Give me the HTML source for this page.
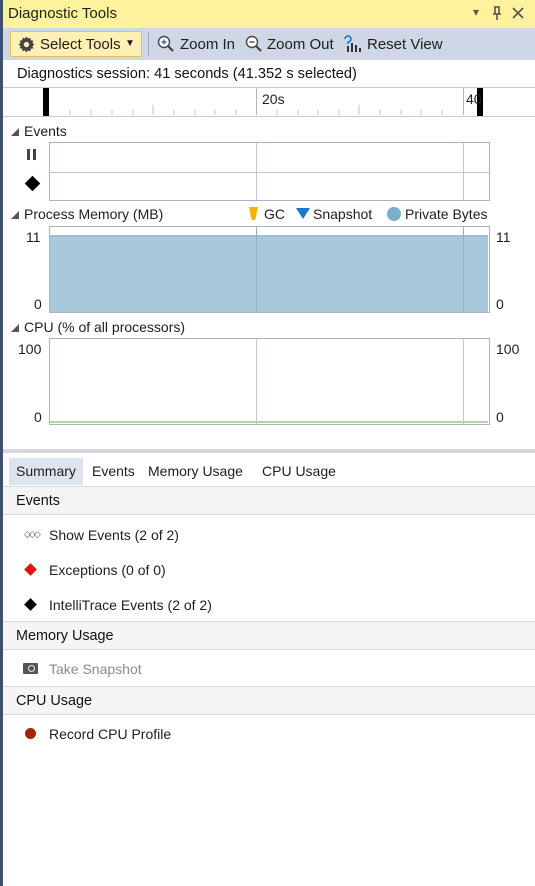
<!DOCTYPE html>
<html><head><meta charset="utf-8"><style>
*{margin:0;padding:0;box-sizing:border-box}
body{width:535px;height:886px;position:relative;background:#fff;font-family:"Liberation Sans",sans-serif;font-size:14px;color:#1e1e1e;overflow:hidden}
.a{position:absolute;white-space:nowrap}
.box{position:absolute;border:1px solid #aab3c5;background:#fff}
.vl{position:absolute;width:1px;background:#bfc6d4}
.hdr{position:absolute;left:3px;right:0;height:29px;background:#f5f5f5;border-top:1px solid #d6dae2;border-bottom:1px solid #d6dae2}
.hdr span{position:absolute;left:13px;top:6px;font-size:14.4px;color:#111}
.tri{display:inline-block;width:0;height:0;border-left:8px solid transparent;border-bottom:8px solid #555;margin-right:5px}
</style></head><body>
<div class="a" style="left:0;top:0;width:3px;height:886px;background:#3e4f74"></div>
<div class="a" style="left:3px;top:0;right:0;height:28px;background:#fff29d"></div>
<div class="a" style="left:8px;top:5px;font-size:15px">Diagnostic Tools</div>
<div class="a" style="left:473px;top:5px;font-size:12px;color:#555">▾</div>
<svg class="a" style="left:491px;top:6px" width="12" height="14"><path d="M3 1h6M4 1v7M8 1v7M2 8h8M6 8v6" stroke="#555" stroke-width="1.6" fill="none"/></svg>
<svg class="a" style="left:512px;top:7px" width="12" height="12"><path d="M1 1l10 10M11 1L1 11" stroke="#555" stroke-width="1.6"/></svg>
<div class="a" style="left:3px;top:28px;right:0;height:32px;background:#cfd6e5"></div>
<div class="a" style="left:10px;top:31px;width:132px;height:26px;background:#fff0b3;border:1px solid #e5c365"></div>
<svg class="a" style="left:18px;top:36px" width="17" height="17" viewBox="0 0 16 16"><path d="M8 0.5l1.4 2 2.3-.8.3 2.4 2.4.3-.8 2.3 2 1.3-2 1.4.8 2.3-2.4.3-.3 2.4-2.3-.8L8 15.5l-1.4-2-2.3.8-.3-2.4-2.4-.3.8-2.3-2-1.3 2-1.4-.8-2.3 2.4-.3.3-2.4 2.3.8z" fill="#444"/><circle cx="8" cy="8" r="2.5" fill="#fff0b3"/></svg>
<div class="a" style="left:40px;top:36px;font-size:15px">Select Tools</div>
<div class="a" style="left:125px;top:38px;font-size:10px">▼</div>
<div class="a" style="left:148px;top:32px;width:1px;height:24px;background:#a0a8b8"></div>
<svg class="a" style="left:157px;top:35px" width="18" height="18"><circle cx="7" cy="7" r="5.5" stroke="#444" stroke-width="1.4" fill="#fff"/><path d="M11 11l5 5" stroke="#444" stroke-width="2.2"/><path d="M4.5 7h5M7 4.5v5" stroke="#1a6fc4" stroke-width="1.4"/></svg>
<div class="a" style="left:180px;top:36px;font-size:15px">Zoom In</div>
<svg class="a" style="left:245px;top:35px" width="18" height="18"><circle cx="7" cy="7" r="5.5" stroke="#444" stroke-width="1.4" fill="#fff"/><path d="M11 11l5 5" stroke="#444" stroke-width="2.2"/><path d="M4.5 7h5" stroke="#444" stroke-width="1.4"/></svg>
<div class="a" style="left:267px;top:36px;font-size:15px">Zoom Out</div>
<svg class="a" style="left:343px;top:35px" width="20" height="18"><path d="M2 4a3 3 0 1 1 3 3v2" stroke="#1a6fc4" stroke-width="1.5" fill="none"/><rect x="4" y="11" width="2" height="6" fill="#333"/><rect x="8" y="8" width="2" height="9" fill="#333"/><rect x="12" y="10" width="2" height="7" fill="#333"/><rect x="16" y="13" width="2" height="4" fill="#333"/></svg>
<div class="a" style="left:367px;top:36px;font-size:15px">Reset View</div>
<div class="a" style="left:17px;top:66px;font-size:14.6px;color:#111">Diagnostics session: 41 seconds (41.352 s selected)</div>
<div class="a" style="left:3px;top:87px;right:0;height:1px;background:#c5cbd6"></div>
<svg class="a" style="left:0;top:88px" width="535" height="28">
<g stroke="#c0c4cc" stroke-width="1">
<line x1="70" y1="22" x2="70" y2="27"/><line x1="91" y1="22" x2="91" y2="27"/><line x1="112" y1="22" x2="112" y2="27"/><line x1="133" y1="22" x2="133" y2="27"/><line x1="153" y1="17" x2="153" y2="27"/><line x1="174" y1="22" x2="174" y2="27"/><line x1="195" y1="22" x2="195" y2="27"/><line x1="215" y1="22" x2="215" y2="27"/><line x1="236" y1="22" x2="236" y2="27"/><line x1="277" y1="22" x2="277" y2="27"/><line x1="298" y1="22" x2="298" y2="27"/><line x1="318" y1="22" x2="318" y2="27"/><line x1="339" y1="22" x2="339" y2="27"/><line x1="359" y1="17" x2="359" y2="27"/><line x1="380" y1="22" x2="380" y2="27"/><line x1="401" y1="22" x2="401" y2="27"/><line x1="421" y1="22" x2="421" y2="27"/><line x1="442" y1="22" x2="442" y2="27"/></g>
<g stroke="#b0b6c2"><line x1="256.5" y1="0" x2="256.5" y2="27"/><line x1="463.5" y1="0" x2="463.5" y2="27"/></g>
<rect x="43" y="0" width="6" height="28" fill="#000"/><rect x="477" y="0" width="6" height="28" fill="#000"/>
<text x="262" y="16" font-size="14" font-family="Liberation Sans" fill="#222">20s</text>
<text x="466" y="16" font-size="14" font-family="Liberation Sans" fill="#222">40</text>
</svg>
<div class="a" style="left:3px;top:116px;right:0;height:1px;background:#c5cbd6"></div>

<div class="a" style="left:11px;top:123px;font-size:14px"><span class="tri"></span>Events</div>
<div class="a" style="left:27px;top:149px;width:3px;height:11px;background:#444"></div>
<div class="a" style="left:33px;top:149px;width:3px;height:11px;background:#444"></div>
<div class="a" style="left:27px;top:178px;width:11px;height:11px;background:#000;transform:rotate(45deg)"></div>
<div class="box" style="left:49px;top:142px;width:441px;height:59px"></div>
<div class="a" style="left:50px;top:172px;width:439px;height:1px;background:#bfc6d4"></div>
<div class="vl" style="left:256px;top:143px;height:57px"></div>
<div class="vl" style="left:463px;top:143px;height:57px"></div>

<div class="a" style="left:11px;top:206px;font-size:14px"><span class="tri"></span>Process Memory (MB)</div>
<div class="a" style="left:249px;top:207px;width:9px;height:13px;background:#f5b400;border-radius:0 0 5px 5px;clip-path:polygon(0 0,100% 0,70% 100%,30% 100%)"></div>
<div class="a" style="left:264px;top:206px;font-size:14px">GC</div>
<div class="a" style="left:296px;top:208px;width:0;height:0;border-left:7px solid transparent;border-right:7px solid transparent;border-top:11px solid #1c75cf"></div>
<div class="a" style="left:313px;top:206px;font-size:14px">Snapshot</div>
<div class="a" style="left:387px;top:207px;width:14px;height:14px;border-radius:50%;background:#7aafca"></div>
<div class="a" style="left:405px;top:206px;font-size:14px">Private Bytes</div>
<div class="box" style="left:49px;top:226px;width:441px;height:87px"></div>
<div class="a" style="left:50px;top:235px;width:438px;height:77px;background:#a8c9db"></div>
<div class="a" style="left:50px;top:235px;width:438px;height:2px;background:#9cc0d3"></div>
<div class="vl" style="left:256px;top:227px;height:85px;background:#8fb4c8"></div>
<div class="vl" style="left:463px;top:227px;height:85px;background:#8fb4c8"></div>
<div class="a" style="left:26px;top:229px;font-size:14px">11</div>
<div class="a" style="left:496px;top:229px;font-size:14px">11</div>
<div class="a" style="left:34px;top:296px;font-size:14px">0</div>
<div class="a" style="left:496px;top:296px;font-size:14px">0</div>

<div class="a" style="left:11px;top:319px;font-size:14px"><span class="tri"></span>CPU (% of all processors)</div>
<div class="box" style="left:49px;top:338px;width:441px;height:87px"></div>
<div class="a" style="left:50px;top:421px;width:438px;height:2px;background:#b5d6a0"></div>
<div class="vl" style="left:256px;top:339px;height:85px"></div>
<div class="vl" style="left:463px;top:339px;height:85px"></div>
<div class="a" style="left:18px;top:341px;font-size:14px">100</div>
<div class="a" style="left:496px;top:341px;font-size:14px">100</div>
<div class="a" style="left:34px;top:409px;font-size:14px">0</div>
<div class="a" style="left:496px;top:409px;font-size:14px">0</div>

<div class="a" style="left:3px;top:449px;right:0;height:4px;background:#d4d8de"></div>
<div class="a" style="left:9px;top:458px;width:74px;height:27px;background:#dde4f0"></div>
<div class="a" style="left:16px;top:463px;font-size:14px">Summary</div>
<div class="a" style="left:92px;top:463px;font-size:14px">Events</div>
<div class="a" style="left:148px;top:463px;font-size:14px">Memory Usage</div>
<div class="a" style="left:262px;top:463px;font-size:14px">CPU Usage</div>

<div class="hdr" style="top:486px"><span>Events</span></div>
<div class="a" style="left:24px;top:529px;font-size:9px;color:#555;letter-spacing:-2px">◇◇◇</div>
<div class="a" style="left:49px;top:527px;font-size:14px">Show Events (2 of 2)</div>
<div class="a" style="left:26px;top:565px;width:9px;height:9px;background:#e51400;transform:rotate(45deg)"></div>
<div class="a" style="left:49px;top:562px;font-size:14px">Exceptions (0 of 0)</div>
<div class="a" style="left:26px;top:600px;width:9px;height:9px;background:#000;transform:rotate(45deg)"></div>
<div class="a" style="left:49px;top:597px;font-size:14px">IntelliTrace Events (2 of 2)</div>

<div class="hdr" style="top:621px"><span>Memory Usage</span></div>
<div class="a" style="left:23px;top:663px;width:15px;height:11px;background:#555;border-radius:1px"></div>
<div class="a" style="left:28px;top:665px;width:7px;height:7px;border-radius:50%;border:1.5px solid #eee"></div>
<div class="a" style="left:49px;top:661px;font-size:14px;color:#8a8a8a">Take Snapshot</div>

<div class="hdr" style="top:686px"><span>CPU Usage</span></div>
<div class="a" style="left:25px;top:728px;width:11px;height:11px;border-radius:50%;background:#a1260d"></div>
<div class="a" style="left:49px;top:726px;font-size:14px">Record CPU Profile</div>
</body></html>
